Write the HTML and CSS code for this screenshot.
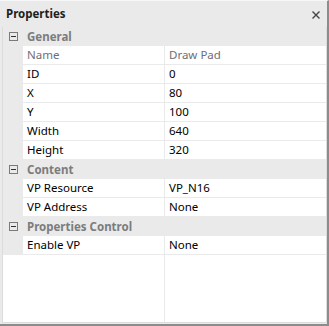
FILE: index.html
```html
<!DOCTYPE html>
<html lang="en">
<head>
    <meta charset="UTF-8">
    <title>Properties</title>

    <link rel="stylesheet" href="styles.css">
</head>
<body>
<div class="panel">
    <!-- Title bar -->
    <div class="titlebar">
        <span class="title">Properties</span>
        <svg class="close" width="8" height="8" viewBox="0 0 8 8">
            <path d="M0.5 0.5 L7.5 7.5 M7.5 0.5 L0.5 7.5" stroke="#444" stroke-width="1.4" fill="none"/>
        </svg>
    </div>

    <div class="grid">
        <div class="group">
            <svg class="toggle" width="9" height="9" viewBox="0 0 9 9">
                <rect x="0.5" y="0.5" width="8" height="8" fill="none" stroke="#7a7a7a"/>
                <path d="M2 4.5 H7" stroke="#333" stroke-width="1"/>
            </svg>
            <span>General</span>
        </div>
        <div class="row header"><div class="name">Name</div><div class="value">Draw Pad</div></div>
        <div class="row"><div class="name">ID</div><div class="value">0</div></div>
        <div class="row"><div class="name">X</div><div class="value">80</div></div>
        <div class="row"><div class="name">Y</div><div class="value">100</div></div>
        <div class="row"><div class="name">Width</div><div class="value">640</div></div>
        <div class="row"><div class="name">Height</div><div class="value">320</div></div>

        <div class="group">
            <svg class="toggle" width="9" height="9" viewBox="0 0 9 9">
                <rect x="0.5" y="0.5" width="8" height="8" fill="none" stroke="#7a7a7a"/>
                <path d="M2 4.5 H7" stroke="#333" stroke-width="1"/>
            </svg>
            <span>Content</span>
        </div>
        <div class="row"><div class="name">VP Resource</div><div class="value">VP_N16</div></div>
        <div class="row"><div class="name">VP Address</div><div class="value">None</div></div>

        <div class="group">
            <svg class="toggle" width="9" height="9" viewBox="0 0 9 9">
                <rect x="0.5" y="0.5" width="8" height="8" fill="none" stroke="#7a7a7a"/>
                <path d="M2 4.5 H7" stroke="#333" stroke-width="1"/>
            </svg>
            <span>Properties Control</span>
        </div>
        <div class="row"><div class="name">Enable VP</div><div class="value">None</div></div>

        <!-- Empty space below the last property -->
        <div class="filler"><div></div><div></div></div>
    </div>
</div>
</body>
</html>
```

FILE: styles.css
```css
body {
    margin: 0;
    font-family: "Noto Sans", Arial, sans-serif;
    font-size: 11.5px;
    color: #000;
    background-color: #eaeaea;
}

.panel {
    width: 329px;
    height: 326px;
    box-sizing: border-box;
    display: flex;
    flex-direction: column;
    background-color: #eaeaea;
    border-top: 1px solid #f7f7f7;
    border-right: 2px solid #8c8c8c;
    border-bottom: 2px solid #8c8c8c;
    padding-bottom: 1px;
}

/* Title bar */
.titlebar {
    height: 26px;
    flex: none;
    display: flex;
    align-items: center;
    justify-content: space-between;
    padding: 0 6px 0 6px;
}

.title {
    font-weight: bold;
    color: #1e1e1e;
    margin-top: -2px;
}

.close {
    margin-right: 1px;
    margin-top: 1px;
}

/* Property grid */
.grid {
    flex: 1;
    display: flex;
    flex-direction: column;
    margin-left: 2px;
    border: 1px solid #dcdcdc;
    border-top: none;
    background-color: #eaeaea;
}

.group {
    height: 18px;
    margin-bottom: 1px;
    display: flex;
    align-items: center;
    font-weight: bold;
    color: #7c7c7c;
}

.toggle {
    margin-left: 6px;
    margin-right: 9px;
}

.row {
    height: 18px;
    margin-bottom: 1px;
    display: grid;
    grid-template-columns: 141px 161px;
    column-gap: 1px;
    padding-left: 20px;
    line-height: 18px;
}

.row .name,
.row .value {
    background-color: #fff;
    padding-left: 4px;
    white-space: nowrap;
    overflow: hidden;
}

.row.header {
    color: #6e6e78;
}

.filler {
    flex: 1;
    display: grid;
    grid-template-columns: 161px 161px;
    column-gap: 1px;
}

.filler div {
    background-color: #fff;
}
```
